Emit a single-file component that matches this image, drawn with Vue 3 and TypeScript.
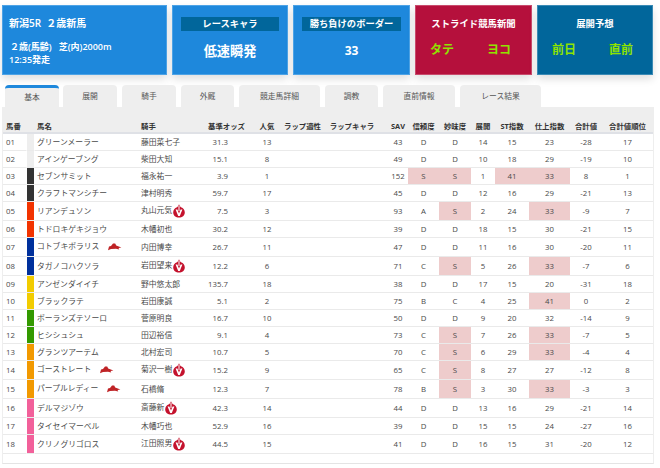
<script setup lang="ts">
interface Horse {
  no: string; name: string; jockey: string; odds: string; pop: number; sav: number;
  rel: string; val: string; dev: number; st: number; fin: number; sum: number; rank: number;
  color: string; fire?: boolean; horse?: boolean;
}
const C = ['#eeeeee', '#333333', '#f23300', '#00309c', '#f2cc00', '#339900', '#f29900', '#f2609a'];
const raw: any[][] = [
  ['グリーンメーラー', '藤田菜七子', '31.3', 13, 43, 'D', 'D', 14, 15, 23, -28, 17, 0],
  ['アインゲーブング', '柴田大知', '15.1', 8, 49, 'D', 'D', 10, 18, 29, -19, 10, 0],
  ['セブンサミット', '福永祐一', '3.9', 1, 152, 'S', 'S', 1, 41, 33, 8, 1, 1],
  ['クラフトマンシチー', '津村明秀', '59.7', 17, 45, 'D', 'D', 12, 16, 29, -21, 13, 1],
  ['リアンデュソン', '丸山元気', '7.5', 3, 93, 'A', 'S', 2, 24, 33, -9, 7, 2, 'f'],
  ['トドロキゲキジョウ', '木幡初也', '30.2', 12, 39, 'D', 'D', 18, 15, 30, -21, 15, 2],
  ['コトブキボラリス', '内田博幸', '26.7', 11, 47, 'D', 'D', 11, 16, 30, -20, 11, 3, 'h'],
  ['タガノコハクソラ', '岩田望来', '12.2', 6, 71, 'C', 'S', 5, 26, 33, -7, 6, 3, 'f'],
  ['アンゼンダイイチ', '野中悠太郎', '135.7', 18, 38, 'D', 'D', 17, 15, 20, -31, 18, 4],
  ['ブラックラテ', '岩田康誠', '5.1', 2, 75, 'B', 'C', 4, 25, 41, 0, 2, 4],
  ['ボーランズテソーロ', '菅原明良', '16.7', 10, 50, 'D', 'D', 9, 20, 32, -14, 9, 5],
  ['ヒシシュシュ', '田辺裕信', '9.1', 4, 73, 'C', 'S', 7, 26, 33, -7, 5, 5],
  ['グランツアーテム', '北村宏司', '10.7', 5, 70, 'C', 'S', 6, 29, 33, -4, 4, 6],
  ['ゴーストレート', '菊沢一樹', '15.2', 9, 65, 'C', 'S', 8, 27, 27, -12, 8, 6, 'hf'],
  ['パープルレディー', '石橋脩', '12.3', 7, 78, 'B', 'S', 3, 30, 33, -3, 3, 6, 'h'],
  ['デルマジゾウ', '斎藤新', '42.3', 14, 44, 'D', 'D', 13, 16, 29, -21, 14, 7, 'f'],
  ['タイセイマーベル', '木幡巧也', '52.9', 16, 39, 'D', 'D', 15, 15, 24, -27, 16, 7],
  ['クリノグリゴロス', '江田照男', '44.5', 15, 41, 'D', 'D', 16, 15, 31, -20, 12, 7, 'f'],
];
const horses: Horse[] = raw.map((r: any[], i: number) => ({
  no: String(i + 1).padStart(2, '0'), name: r[0], jockey: r[1], odds: r[2], pop: r[3], sav: r[4],
  rel: r[5], val: r[6], dev: r[7], st: r[8], fin: r[9], sum: r[10], rank: r[11],
  color: C[r[12]], fire: (r[13] || '').includes('f'), horse: (r[13] || '').includes('h'),
}));
const tabs = ['基本', '展開', '騎手', '外厩', '競走馬詳細', '調教', '直前情報', 'レース結果'];
const heads = ['基準オッズ', '人気', 'ラップ適性', 'ラップキャラ', 'SAV', '信頼度', '妙味度', '展開', 'ST指数', '仕上指数', '合計値', '合計値順位'];
const widths = [23, 9, 103, 65, 47, 34, 32, 72, 20, 31, 32, 24, 34, 41, 32, 51];
</script>

<template>
  <div class="page">
    <div class="cards">
      <section class="card info">
        <div class="race">新潟5R&nbsp; ２歳新馬</div>
        <div class="cond">２歳(馬齢)&nbsp;&nbsp; 芝(内)2000m</div>
        <div class="time">12:35発走</div>
      </section>
      <section class="card mid">
        <div class="bar">レースキャラ</div>
        <div class="big">低速瞬発</div>
      </section>
      <section class="card mid">
        <div class="bar">勝ち負けのボーダー</div>
        <div class="big num">33</div>
      </section>
      <section class="card pair red">
        <div class="pair-title">ストライド競馬新聞</div>
        <div class="links"><span>タテ</span><span>ヨコ</span></div>
      </section>
      <section class="card pair navy">
        <div class="pair-title">展開予想</div>
        <div class="links"><span>前日</span><span>直前</span></div>
      </section>
    </div>

    <nav class="tabs">
      <div v-for="(t, i) in tabs" :key="t" class="tab" :class="[`t${i}`, { active: i === 0 }]">{{ t }}</div>
    </nav>

    <div class="panel">
      <table>
        <colgroup><col v-for="(w, i) in widths" :key="i" :style="{ width: w + 'px' }" /></colgroup>
        <thead>
          <tr>
            <th class="l first">馬番</th>
            <th></th>
            <th class="l">馬名</th>
            <th class="l">騎手</th>
            <th v-for="h in heads" :key="h">{{ h }}</th>
          </tr>
        </thead>
        <tbody>
          <tr v-for="h in horses" :key="h.no">
            <td class="l first">{{ h.no }}</td>
            <td class="swatch" :style="{ backgroundColor: h.color }"></td>
            <td class="l name">
              {{ h.name }}
              <svg v-if="h.horse" class="ico-horse" viewBox="0 0 14 18" width="14" height="18">
                <path d="M0 12.2 L1 8.6 L3 8 L5 5.4 L7.2 5.4 L8.2 7.4 L13.4 9.4 L10.6 10 L11.2 11.6 L8 10.8 L3 11 Z" fill="#bf2326" />
              </svg>
            </td>
            <td class="l jockey">
              {{ h.jockey }}<svg v-if="h.fire" class="ico-fire" viewBox="0 0 12 18" width="12" height="18">
                <path d="M6 2.2 C6.6 3.8 7.2 4.6 8 5.2 C10.4 6.1 11.8 8.1 11.8 10.4 C11.8 13.4 9.2 15.6 6 15.6 C2.8 15.6 0.2 13.4 0.2 10.4 C0.2 8.1 1.6 6.1 4 5.2 C4.8 4.6 5.5 3.8 6 2.2 Z" fill="#c4122d" />
                <path d="M2.6 7.6 L4.4 7.6 L6 11.6 L7.6 7.6 L9.4 7.6 L6.8 14 L5.2 14 Z" fill="#fff" />
                <path d="M5.5 3.8 H6.5 V9 H5.5 Z" fill="#fff" />
              </svg>
            </td>
            <td class="odds">{{ h.odds }}</td>
            <td>{{ h.pop }}</td>
            <td></td>
            <td></td>
            <td>{{ h.sav }}</td>
            <td :class="{ hot: h.rel === 'S' }">{{ h.rel }}</td>
            <td :class="{ hot: h.val === 'S' }">{{ h.val }}</td>
            <td>{{ h.dev }}</td>
            <td :class="{ hot: h.st >= 33 }">{{ h.st }}</td>
            <td :class="{ hot: h.fin >= 33 }">{{ h.fin }}</td>
            <td>{{ h.sum }}</td>
            <td>{{ h.rank }}</td>
          </tr>
        </tbody>
      </table>
    </div>
  </div>
</template>

<style>
html, body { margin: 0; background: #fff; }
</style>

<style scoped>
.page {
  width: 660px;
  height: 468px;
  overflow: hidden;
  box-sizing: border-box;
  padding: 5px 7px 0 2px;
  font-family: "Open Sans", "Noto Sans CJK JP", sans-serif;
  color: #4a4a4a;
}
.cards { display: flex; gap: 5px; height: 70px; }
.card {
  box-sizing: border-box;
  color: #fff;
  background: #1e88dc;
  border: 1px solid #4da3e6;
  box-shadow: 0 4px 8px rgba(0, 0, 0, 0.13);
  text-align: center;
}
.info { width: 165px; text-align: left; padding-left: 6px; font-weight: 600; }
.race { font-size: 10px; line-height: 14px; margin-top: 10px; }
.cond { font-size: 9px; line-height: 12px; margin-top: 11px; padding-left: 1px; }
.time { font-size: 9px; line-height: 12px; margin-top: 1px; }
.mid { width: 116px; padding: 11px 8px 0; }
.mid + .mid { width: 117px; }
.bar {
  background: #01669b;
  font-size: 9.3px;
  line-height: 14px;
  font-weight: 600;
  white-space: nowrap;
}
.big { font-size: 13.2px; line-height: 18px; margin-top: 11px; font-weight: 600; }
.num { font-weight: 700; font-size: 12px; }
.pair { width: 117px; padding-top: 11px; }
.pair.navy { width: 116px; }
.red { background: #b5103c; border-color: #c84a6c; }
.navy { background: #01669b; border-color: #3a8ab5; }
.pair-title { font-size: 9.4px; line-height: 14px; font-weight: 600; white-space: nowrap; }
.links {
  display: grid;
  grid-template-columns: 52px 62px;
  margin-top: 10px;
  font-size: 12px;
  line-height: 18px;
  font-weight: 700;
  color: #8fe300;
}
.tabs { display: flex; margin-top: 10px; padding-left: 3px; height: 22px; }
.tab {
  box-sizing: border-box;
  width: 54px;
  margin-right: 5px;
  background: #eeeeee;
  border-radius: 4px 4px 0 0;
  font-size: 7.8px;
  line-height: 22px;
  text-align: center;
  color: #555;
}
.tab.active { border-top: 3px solid #1e88dc; line-height: 19px; margin-right: 4px; }
.t3, .t5 { width: 53px; }
.t4 { width: 81px; }
.t6 { width: 72px; }
.t7 { width: 81px; }
.panel {
  width: 650px;
  border-bottom: 1px solid #e4e4e4;
  border-left: 1px solid #eee;
  border-right: 1px solid #eee;
  padding-bottom: 9px;
}
table {
  width: 650px;
  table-layout: fixed;
  border-collapse: separate;
  border-spacing: 0;
  font-size: 7.8px;
}
th {
  height: 27px;
  box-sizing: border-box;
  padding: 0;
  background: #eeeeee;
  border-bottom: 2px solid #dfe1e6;
  color: #333;
  font-size: 7.4px;
  font-weight: 700;
  vertical-align: bottom;
  white-space: nowrap;
  text-align: center;
  line-height: 11px;
}
td {
  padding: 0;
  height: 17px;
  box-sizing: border-box;
  border-bottom: 1px solid #eaeaea;
  line-height: 16px;
  text-align: center;
  white-space: nowrap;
  overflow: visible;
}
.l { text-align: left; }
.first { padding-left: 3px; }
.name { padding-left: 2px; }
.jockey { padding-left: 3px; }
th.l:nth-child(3) { padding-left: 2px; }
th.l:nth-child(4) { padding-left: 3px; }
.swatch {
  border-left: 1px solid #fff;
  border-right: 1px solid #fff;
  background-clip: padding-box;
}
td.odds { text-align: right; padding-right: 22px; }
.hot { background: #eecccc; }
.ico-horse { vertical-align: middle; margin-left: 7px; }
.ico-fire { vertical-align: middle; margin-left: 1px; }
</style>
